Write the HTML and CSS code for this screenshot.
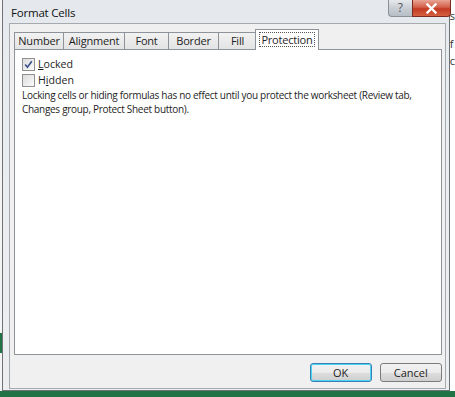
FILE: index.html
```html
<!DOCTYPE html>
<html>
<head>
<meta charset="utf-8">
<link rel="stylesheet" href="styles.css">
</head>
<body>
<div class="screen">
  <div class="left-strip"><div class="green-tab"></div></div>
  <div class="window">
    <div class="titlebar">
      <span class="title">Format Cells</span>
      <div class="caption-buttons">
        <div class="cap-help">?</div>
        <div class="cap-close">
          <svg width="13" height="11" viewBox="0 0 13 11"><path d="M2.5 1.5 L10.5 9.5 M10.5 1.5 L2.5 9.5" stroke="#fff" stroke-width="2.4" stroke-linecap="square"/></svg>
        </div>
      </div>
    </div>
    <div class="client">
      <div class="tabs">
        <div class="tab t-number">Number</div>
        <div class="tab t-align">Alignment</div>
        <div class="tab t-font">Font</div>
        <div class="tab t-border">Border</div>
        <div class="tab t-fill">Fill</div>
        <div class="tab tab-active"><span class="focus">Protection</span></div>
      </div>
      <div class="panel">
        <label class="check-row">
          <span class="checkbox">
            <svg width="9" height="9" viewBox="0 0 9 9"><path d="M1.2 4.6 L3.4 7.2 L7.8 1.2" stroke="#3b4f8a" stroke-width="1.6" fill="none"/></svg>
          </span>
          <span><u>L</u>ocked</span>
        </label>
        <label class="check-row">
          <span class="checkbox"></span>
          <span>H<u>i</u>dden</span>
        </label>
        <p class="note">Locking cells or hiding formulas has no effect until you protect the worksheet (Review tab,<br>Changes group, Protect Sheet button).</p>
      </div>
      <div class="footer">
        <div class="btn btn-default">OK</div>
        <div class="btn">Cancel</div>
      </div>
    </div>
  </div>
  <div class="right-strip">
    <span class="xl-s">s</span>
    <span class="xl-f">f</span>
    <span class="xl-c">c</span>
  </div>
</div>
<div class="statusbar"></div>
</body>
</html>
```
FILE: styles.css
```css
html, body {
  margin: 0;
  padding: 0;
}
body {
  width: 455px;
  height: 397px;
  overflow: hidden;
  background: #ffffff;
  font-family: "Open Sans", "DejaVu Sans", sans-serif;
  font-size: 10.6px;
  color: #1e1e1e;
}
.screen {
  display: flex;
  height: 391px;
}
.left-strip {
  width: 2px;
  background: #f4f4f4;
  display: flex;
  flex-direction: column;
  padding-top: 333px;
}
.green-tab {
  height: 20px;
  background: #217346;
}
.window {
  width: 449px;
  box-sizing: border-box;
  border: 1px solid #6f7378;
  border-top: none;
  background: linear-gradient(#e4e8ec, #e9ecef 60px, #eceef0);
  padding: 0 3px 1px 6px;
  display: flex;
  flex-direction: column;
}
.titlebar {
  height: 24px;
  display: flex;
  align-items: flex-start;
  justify-content: space-between;
}
.title {
  font-size: 11.5px;
  letter-spacing: -0.2px;
  margin: 5px 0 0 2px;
  color: #111;
}
.caption-buttons {
  display: flex;
  margin-right: -5px;
  position: relative;
  z-index: 2;
}
.cap-help {
  width: 24px;
  height: 17px;
  box-sizing: border-box;
  border: 1px solid #8b9097;
  border-top: none;
  border-right: none;
  border-radius: 0 0 0 4px;
  background: linear-gradient(#e6e9ec, #c9ced4 50%, #b7bec6);
  color: #50555b;
  font-size: 12px;
  line-height: 16px;
  text-align: center;
}
.cap-close {
  width: 39px;
  height: 17px;
  box-sizing: border-box;
  border: 1px solid #7a2a20;
  border-top: none;
  border-radius: 0 0 4px 0;
  background: linear-gradient(#e9a494, #d2604a 45%, #c23a22 55%, #d5613f);
  display: flex;
  align-items: center;
  justify-content: center;
}
.client {
  flex: 1;
  border: 1px solid #a4aab0;
  background: #f0f0f0;
  padding: 6px 3px 6px 4px;
  display: flex;
  flex-direction: column;
}
.tabs {
  display: flex;
  align-items: flex-end;
  height: 20px;
  position: relative;
  z-index: 1;
  margin-bottom: -1px;
}
.tab {
  height: 17px;
  box-sizing: border-box;
  border: 1px solid #8e939a;
  border-bottom: none;
  border-left: none;
  background: linear-gradient(#f2f2f2, #e3e3e3);
  text-align: center;
  line-height: 16px;
  margin-bottom: 1px;
  font-size: 11px;
  letter-spacing: -0.2px;
}
.t-number { width: 50px; border-left: 1px solid #8e939a; }
.t-align { width: 61px; }
.t-font { width: 44px; }
.t-border { width: 50px; }
.t-fill { width: 38px; }
.tab-active {
  width: 64px;
  height: 21px;
  margin-left: -2px;
  margin-bottom: 0;
  box-sizing: border-box;
  border: 1px solid #8e939a;
  border-bottom: none;
  background: #ffffff;
  text-align: center;
  padding-top: 2px;
  font-size: 11px;
  letter-spacing: -0.2px;
}
.focus {
  display: inline-block;
  border: 1px dotted #555;
  line-height: 13px;
  padding: 0 1px;
}
.panel {
  height: 306px;
  box-sizing: border-box;
  border: 1px solid #8e939a;
  background: #ffffff;
  padding: 6px 7px 0 7px;
}
.check-row {
  display: flex;
  align-items: center;
  gap: 2px;
  height: 16px;
}
.checkbox {
  width: 13px;
  height: 13px;
  box-sizing: border-box;
  border: 1px solid #8f8f8f;
  background: linear-gradient(135deg, #dcdcdc, #fbfbfb);
  display: flex;
  align-items: center;
  justify-content: center;
  margin-right: 1px;
}
.note {
  margin: 0;
  font-size: 10px;
  line-height: 14px;
  letter-spacing: -0.3px;
  white-space: nowrap;
}
.footer {
  display: flex;
  justify-content: flex-end;
  gap: 8px;
  margin-top: 8px;
}
.btn {
  width: 62px;
  height: 19px;
  box-sizing: border-box;
  border: 1px solid #7c7c7c;
  border-radius: 3px;
  background: linear-gradient(#f2f2f2, #ebebeb 50%, #dddddd 51%, #cfcfcf);
  text-align: center;
  line-height: 17px;
  font-size: 11px;
}
.btn-default {
  border-color: #3c7fb1;
  box-shadow: inset 0 0 0 1px #48d4f6;
}
.right-strip {
  flex: 1;
  background: #ffffff;
  display: flex;
  flex-direction: column;
  font-size: 11px;
  color: #333;
}
.xl-s { margin-top: 8px; }
.xl-f { margin-top: 13px; }
.xl-c { margin-top: 2px; }
.statusbar {
  height: 6px;
  background: #217346;
}
```
